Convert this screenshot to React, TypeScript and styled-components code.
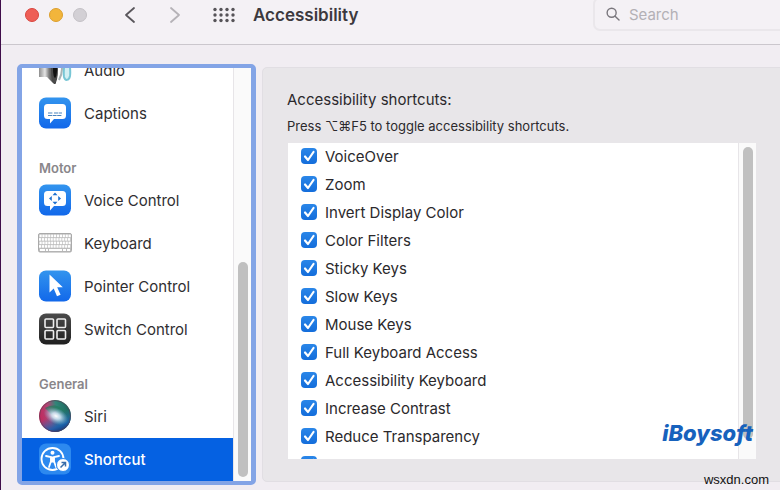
import React from "react";
import styled, { createGlobalStyle, css } from "styled-components";

const Global = createGlobalStyle`
  *, *::before, *::after { box-sizing: border-box; }
  body { margin: 0; background: #f1edf2; font-family: Inter, "Liberation Sans", sans-serif; color: #2b292c; }
  button, input { font-family: inherit; }
`;

const Window = styled.div`
  position: relative;
  display: flex;
  flex-direction: column;
  height: 100vh;
  overflow: hidden;
  border-left: 1px solid #3f0d4a;
  background: #f1edf2;
`;

const Toolbar = styled.header`
  display: flex;
  flex: none;
  align-items: flex-start;
  height: 45px;
  padding-left: 24px;
  overflow: hidden;
  border-bottom: 1px solid #cbc7cd;
  background: #f4f1f5;
`;

const Lights = styled.div`
  display: flex;
  align-items: center;
  gap: 10px;
  height: 30px;
  width: 82px;
`;

const Light = styled.button<{ $fill: string; $edge: string }>`
  width: 14px;
  height: 14px;
  padding: 0;
  border: 1px solid ${(p) => p.$edge};
  border-radius: 50%;
  background: ${(p) => p.$fill};
`;

const ToolButton = styled.button<{ $wide?: boolean }>`
  display: flex;
  align-items: center;
  justify-content: center;
  width: ${(p) => (p.$wide ? "54px" : "45px")};
  height: 29px;
  padding: 0;
  border: 0;
  background: none;
`;

const Title = styled.h1`
  flex: 1;
  margin: 0 0 0 2px;
  font-size: 17px;
  font-weight: 600;
  line-height: 30px;
  color: #3c393e;
`;

const Search = styled.label`
  display: flex;
  flex: none;
  align-items: center;
  gap: 9px;
  width: 200px;
  height: 34px;
  margin: -3px -13px 0 0;
  padding: 0 11px;
  border: 2px solid #eae7eb;
  border-radius: 7px;
`;

const SearchInput = styled.input`
  width: 100%;
  padding: 0;
  border: 0;
  outline: 0;
  background: none;
  font-size: 15px;
  color: #2b292c;
  &::placeholder { color: #b3b0b5; opacity: 1; }
`;

const Content = styled.main`
  display: flex;
  flex: 1;
  gap: 6px;
  min-height: 0;
  padding: 19px 0 5px 16px;
`;

const Sidebar = styled.nav`
  display: flex;
  flex: none;
  width: 239px;
  overflow: hidden;
  border: 4px solid #83a4e6;
  border-left-width: 5px;
  border-right-width: 5px;
  border-radius: 5px;
  background: #fff;
`;

const SidebarList = styled.div`
  display: flex;
  flex: 1;
  flex-direction: column;
  justify-content: flex-end;
  overflow: hidden;
`;

const GroupLabel = styled.h2`
  flex: none;
  height: 44px;
  margin: 0;
  padding: 23px 0 0 17px;
  font-size: 13px;
  font-weight: 600;
  line-height: 20px;
  color: #89868a;
`;

const Item = styled.button<{ $selected?: boolean }>`
  display: flex;
  flex: none;
  align-items: center;
  gap: 12px;
  width: 100%;
  height: 43px;
  padding: 0 0 1px 16px;
  border: 0;
  background: none;
  font-size: 15px;
  text-align: left;
  color: #302e31;
  ${(p) => p.$selected && css`
    background: #0561e2;
    color: #fff;
    font-weight: 500;
  `}
`;

const Track = styled.div<{ $bottomGap: string }>`
  display: flex;
  flex: none;
  flex-direction: column;
  align-items: flex-end;
  width: 18px;
  padding: 4px 3px ${(p) => p.$bottomGap} 0;
  border-left: 1px solid #e7e5e8;
  background: #fafafa;
`;

const Thumb = styled.div<{ $size: string }>`
  width: 10px;
  height: ${(p) => p.$size};
  margin-top: auto;
  border-radius: 5px;
  background: #c0c0c0;
`;

const Panel = styled.section`
  display: flex;
  flex: 1;
  flex-direction: column;
  min-width: 0;
  margin: 3px -8px 3px 0;
  padding: 21px 31px 22px 24px;
  border: 1px solid #e1dee3;
  border-radius: 5px;
  background: #e8e6e9;
`;

const Heading = styled.h2`
  margin: 0;
  font-size: 15px;
  font-weight: 400;
  line-height: 22px;
`;

const Hint = styled.p`
  margin: 4px 0 0;
  font-size: 13px;
  line-height: 22px;
`;

const OptionBox = styled.div`
  display: flex;
  flex: 1;
  min-height: 0;
  margin-top: 6px;
  margin-left: 1px;
  overflow: hidden;
  background: #fff;
`;

const Options = styled.div`
  display: flex;
  flex: 1;
  flex-direction: column;
  margin-top: -1px;
  padding-left: 13px;
  overflow: hidden;
`;

const Option = styled.label`
  display: flex;
  flex: none;
  align-items: center;
  gap: 8px;
  height: 28px;
  font-size: 15px;
`;

const CheckFrame = styled.span`
  display: grid;
  width: 16px;
  height: 16px;
  & > * { grid-area: 1 / 1; }
  svg { pointer-events: none; }
`;

const Check = styled.input`
  appearance: none;
  width: 16px;
  height: 16px;
  margin: 0;
  border-radius: 4px;
  background: #c9c7cb;
  &:checked { background: linear-gradient(#2a86e8, #136ddb); }
`;

const Brand = styled.div`
  position: absolute;
  right: 27px;
  bottom: 43px;
  font-family: Inter, "Liberation Sans", sans-serif;
  font-size: 22px;
  font-style: italic;
  font-weight: 800;
  line-height: 28px;
  color: #1762bd;
`;

const SiteMark = styled.div`
  position: absolute;
  right: 11px;
  bottom: 2px;
  font-family: "Liberation Sans", sans-serif;
  font-size: 13px;
  line-height: 16px;
  color: #111;
`;

const Chevron = ({ right }: { right?: boolean }) => (
  <svg width="12" height="18" viewBox="0 0 12 18" fill="none" stroke={right ? "#b5b2b7" : "#59565b"} strokeWidth="1.8" strokeLinecap="round" strokeLinejoin="round">
    <path d={right ? "M2 2l8 7-8 7" : "M10 2L2 9l8 7"} />
  </svg>
);

const Dots = () => (
  <svg width="22" height="16" viewBox="0 0 22 16" fill="#565358">
    {[2, 8, 14, 20].map((x) => [2.5, 8, 13.5].map((y) => <circle key={`${x}-${y}`} cx={x} cy={y} r="1.7" />))}
  </svg>
);

const Magnifier = () => (
  <svg width="16" height="16" viewBox="0 0 16 16" fill="none" stroke="#79767c" strokeWidth="1.6" strokeLinecap="round">
    <circle cx="6.5" cy="6.5" r="5.2" />
    <path d="M10.5 10.5l4.5 4.5" />
  </svg>
);

const Blue = ({ id }: { id: string }) => (
  <>
    <defs>
      <linearGradient id={id} x1="0" y1="0" x2="0" y2="1">
        <stop offset="0" stopColor="#3294ee" />
        <stop offset="1" stopColor="#1268ea" />
      </linearGradient>
    </defs>
    <rect x="1" y="1.5" width="32" height="31" rx="7" fill={`url(#${id})`} />
  </>
);

const Icon = styled.svg.attrs({ width: 34, height: 34, viewBox: "0 0 34 34", fill: "none" })`
  flex: none;
`;

const AudioIcon = () => (
  <Icon>
    <defs>
      <linearGradient id="cone" x1="0" x2="1">
        <stop offset="0" stopColor="#8d8d8d" />
        <stop offset=".35" stopColor="#e4e4e4" />
        <stop offset=".6" stopColor="#777" />
        <stop offset="1" stopColor="#222" />
      </linearGradient>
    </defs>
    <path d="M1 12h7L18 3v27q-1 2-3 0l-6-6H1z" fill="url(#cone)" />
    <ellipse cx="16.500" cy="17" rx="3.500" ry="13.500" fill="#4a4a4a" />
    <ellipse cx="17" cy="16" rx="2" ry="9" fill="#111" />
    <path d="M22 9c3 5 2 12-1 18" stroke="#a9b2b5" strokeWidth="2" />
    <path d="M26 6c1 6-1 12 0 18 1 4 5 4 6-1 1-6-1-11 0-17" fill="#d3eff3" stroke="#78c6d5" strokeWidth="2" />
  </Icon>
);

const CaptionsIcon = () => (
  <Icon>
    <Blue id="cap" />
    <path d="M9.500 8h15A3.500 3.500 0 0 1 28 11.500v8a3.500 3.500 0 0 1-3.500 3.500H16l-4 4.500V23H9.500A3.500 3.500 0 0 1 6 19.500v-8A3.500 3.500 0 0 1 9.500 8z" fill="#fff" />
    <path d="M10 17h5m1 0h8M10 19.500h14" stroke="#4b83bd" strokeWidth="1.200" strokeDasharray="4 .6" />
  </Icon>
);

const VoiceIcon = () => (
  <Icon>
    <Blue id="voi" />
    <path d="M9.500 8h15A3.500 3.500 0 0 1 28 11.500v8a3.500 3.500 0 0 1-3.500 3.500H16l-4 4.500V23H9.500A3.500 3.500 0 0 1 6 19.500v-8A3.500 3.500 0 0 1 9.500 8z" fill="#fff" />
    <path d="M17 9.500l2.500 2.800h-5zM17 21.500l2.500-2.800h-5zM11 15.500l2.800-2.500v5zM23 15.500L20.200 13v5z" fill="#1d70cf" />
  </Icon>
);

const KeyboardIcon = () => (
  <Icon>
    <rect x=".500" y="7.500" width="33" height="18.500" rx="1.500" fill="#bdbdbd" stroke="#aaa" />
    {[0, 1, 2, 3].map((r) =>
      Array.from({ length: 11 }, (_, c) => (
        <rect key={`${r}-${c}`} x={1.5 + c * 2.9 - (r % 2) * 0.5} y={8.6 + r * 3.5} width="2.2" height="2.6" fill="#fff" />
      ))
    )}
    <path d="M2 24h5m1 0h2m1 0h13m1 0h3m1 0h3" stroke="#fff" strokeWidth="2.200" />
  </Icon>
);

const PointerIcon = () => (
  <Icon>
    <Blue id="poi" />
    <path d="M11.500 5.500v18l4.200-4 3.300 7.800 3.600-1.600-3.400-7.500h5.600z" fill="#fff" />
  </Icon>
);

const SwitchIcon = () => (
  <Icon>
    <defs>
      <linearGradient id="swi" x1="0" y1="0" x2="0" y2="1">
        <stop offset="0" stopColor="#4b4b4b" />
        <stop offset="1" stopColor="#202020" />
      </linearGradient>
    </defs>
    <rect x="1" y="1.500" width="32" height="31" rx="7" fill="url(#swi)" />
    {[7, 19].map((x) => [7, 18.5].map((y) => <rect key={`${x}-${y}`} x={x} y={y} width="8.500" height="8.500" rx="1" stroke="#eee" strokeWidth="1.600" />))}
  </Icon>
);

const SiriIcon = () => (
  <Icon>
    <defs>
      <linearGradient id="siri" x1="0" y1=".6" x2="1" y2=".4">
        <stop offset="0" stopColor="#c2265c" />
        <stop offset=".35" stopColor="#b04674" />
        <stop offset=".6" stopColor="#318579" />
        <stop offset="1" stopColor="#19665b" />
      </linearGradient>
      <linearGradient id="siriBlue" x1=".4" y1=".5" x2=".6" y2="1">
        <stop offset="0" stopColor="#2872b9" stopOpacity="0" />
        <stop offset=".7" stopColor="#1a5fae" stopOpacity=".9" />
        <stop offset="1" stopColor="#1b3a7c" />
      </linearGradient>
      <radialGradient id="siriGlow">
        <stop offset="0" stopColor="#fff" />
        <stop offset=".35" stopColor="#d8eafa" stopOpacity=".85" />
        <stop offset="1" stopColor="#8bb4db" stopOpacity="0" />
      </radialGradient>
    </defs>
    <circle cx="17" cy="17" r="16" fill="url(#siri)" />
    <circle cx="17" cy="17" r="16" fill="url(#siriBlue)" />
    <path d="M7 9c8-5 16-2 20 3-7-3-11 0-13 4z" fill="#237e60" opacity=".7" />
    <ellipse cx="18" cy="17" rx="13" ry="8" transform="rotate(25 18 17)" fill="url(#siriGlow)" />
    <circle cx="17" cy="17" r="15.500" stroke="#5b3c50" strokeOpacity=".6" />
  </Icon>
);

const ShortcutIcon = () => (
  <Icon>
    <rect x="1" y="1.500" width="32" height="31" rx="7" fill="#2d89ef" />
    <circle cx="14.500" cy="17" r="11" stroke="#fff" strokeWidth="1.800" />
    <circle cx="14.500" cy="10.800" r="2" fill="#fff" />
    <path d="M8 14l5 1.200v4L11 25m10-11l-5 1.200v4L18 25" stroke="#fff" strokeWidth="1.800" strokeLinecap="round" strokeLinejoin="round" />
    <path d="M12.500 14.500h4v6h-4z" fill="#fff" />
    <circle cx="25" cy="23" r="6.500" fill="#fff" stroke="#2d89ef" />
    <path d="M22.500 25.500l5-5m-4 0h4v4" stroke="#386da9" strokeWidth="1.500" />
  </Icon>
);

type Entry = { label: string; icon: React.ReactNode };
const vision: Entry[] = [
  { label: "Audio", icon: <AudioIcon /> },
  { label: "Captions", icon: <CaptionsIcon /> },
];
const motor: Entry[] = [
  { label: "Voice Control", icon: <VoiceIcon /> },
  { label: "Keyboard", icon: <KeyboardIcon /> },
  { label: "Pointer Control", icon: <PointerIcon /> },
  { label: "Switch Control", icon: <SwitchIcon /> },
];
const general: Entry[] = [
  { label: "Siri", icon: <SiriIcon /> },
  { label: "Shortcut", icon: <ShortcutIcon /> },
];

const options = [
  "VoiceOver", "Zoom", "Invert Display Color", "Color Filters", "Sticky Keys", "Slow Keys",
  "Mouse Keys", "Full Keyboard Access", "Accessibility Keyboard", "Increase Contrast",
  "Reduce Transparency", "",
];

const Items = ({ entries, selected }: { entries: Entry[]; selected?: string }) => (
  <>
    {entries.map((e) => (
      <Item key={e.label} type="button" $selected={e.label === selected}>
        {e.icon}
        {e.label}
      </Item>
    ))}
  </>
);

export default function App() {
  return (
    <>
      <Global />
      <Window>
        <Toolbar>
          <Lights>
            <Light aria-label="Close" $fill="#ee5e56" $edge="#d9463f" />
            <Light aria-label="Minimize" $fill="#f2b53b" $edge="#dc9f2d" />
            <Light aria-label="Full screen" $fill="#d3d0d5" $edge="#c4c1c6" />
          </Lights>
          <ToolButton aria-label="Back"><Chevron /></ToolButton>
          <ToolButton aria-label="Forward"><Chevron right /></ToolButton>
          <ToolButton aria-label="Show all" $wide><Dots /></ToolButton>
          <Title>Accessibility</Title>
          <Search>
            <Magnifier />
            <SearchInput type="search" placeholder="Search" aria-label="Search" />
          </Search>
        </Toolbar>
        <Content>
          <Sidebar>
            <SidebarList>
              <Items entries={vision} />
              <GroupLabel>Motor</GroupLabel>
              <Items entries={motor} />
              <GroupLabel>General</GroupLabel>
              <Items entries={general} selected="Shortcut" />
            </SidebarList>
            <Track $bottomGap="4px"><Thumb $size="53%" /></Track>
          </Sidebar>
          <Panel>
            <Heading>Accessibility shortcuts:</Heading>
            <Hint>Press ⌥⌘F5 to toggle accessibility shortcuts.</Hint>
            <OptionBox>
              <Options>
                {options.map((label) => (
                  <Option key={label}>
                    <CheckFrame>
                      <Check type="checkbox" defaultChecked aria-label={label || "More"} />
                      <svg width="16" height="16" viewBox="0 0 16 16" fill="none" stroke="#fff" strokeWidth="2.2" strokeLinecap="round" strokeLinejoin="round">
                        <path d="M4 8.500l3 3.500 5.500-8" />
                      </svg>
                    </CheckFrame>
                    {label}
                  </Option>
                ))}
              </Options>
              <Track $bottomGap="20px"><Thumb $size="100%" /></Track>
            </OptionBox>
          </Panel>
        </Content>
        <Brand>iBoysoft</Brand>
        <SiteMark>wsxdn.com</SiteMark>
      </Window>
    </>
  );
}
